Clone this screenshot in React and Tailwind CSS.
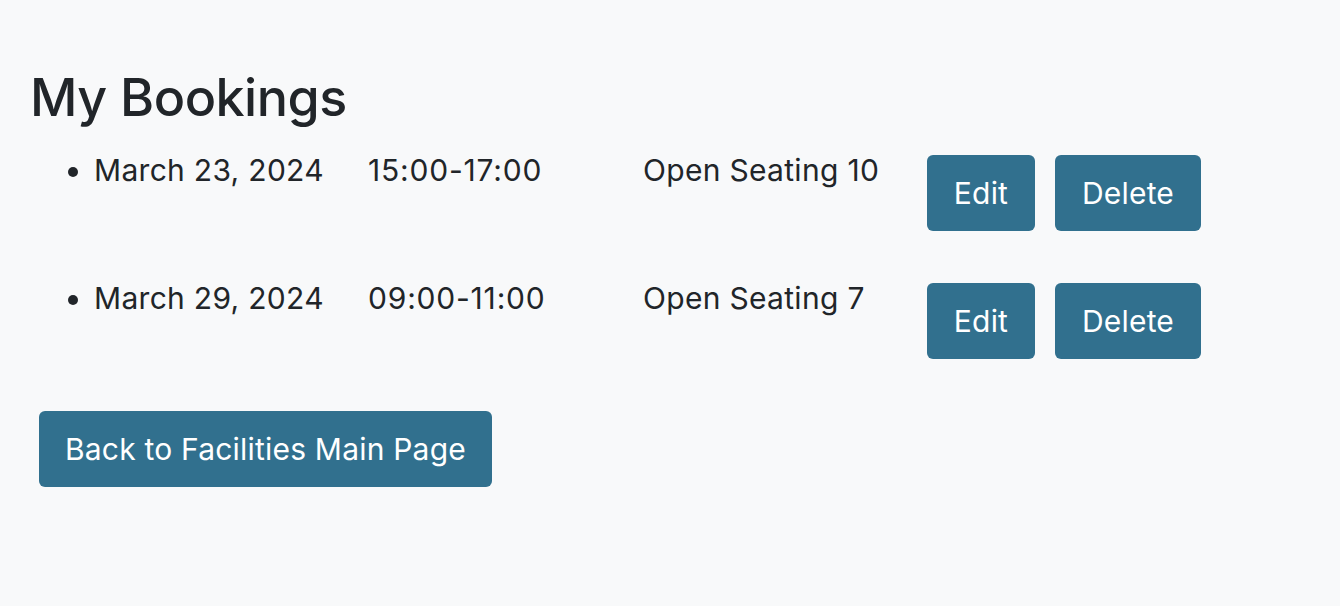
import React from "react";

const BOOKINGS = [
  { date: "March 23, 2024", time: "15:00-17:00", room: "Open Seating 10" },
  { date: "March 29, 2024", time: "09:00-11:00", room: "Open Seating 7" },
];

const btn =
  "rounded-[6px] bg-[#31708e] text-white text-[30px] leading-[40px] py-[18px] tracking-[0.2px]";

export default function App() {
  return (
    <div
      className="min-h-[606px] bg-[#f8f9fa] text-[#212529] pl-[30px] pt-[66px]"
      style={{ fontFamily: "Inter, 'Noto Sans', sans-serif" }}
    >
      <h1 className="text-[52px] leading-[64px] font-medium tracking-[-0.5px]">My Bookings</h1>
      <ul className="list-disc pl-[64px] mt-[25px] text-[30px] leading-[30px] tracking-[0.3px]">
        {BOOKINGS.map((b) => (
          <li key={b.date} className="mb-[52px]">
            <div className="flex items-start">
              <span className="w-[274px]">{b.date}</span>
              <span className="w-[275px] tracking-[0.8px]">{b.time}</span>
              <span className="w-[284px]">{b.room}</span>
              <button className={`${btn} w-[108px]`}>Edit</button>
              <button className={`${btn} w-[146px] ml-[20px]`}>Delete</button>
            </div>
          </li>
        ))}
      </ul>
      <button className={`${btn} ml-[9px] px-[26px]`}>Back to Facilities Main Page</button>
    </div>
  );
}
